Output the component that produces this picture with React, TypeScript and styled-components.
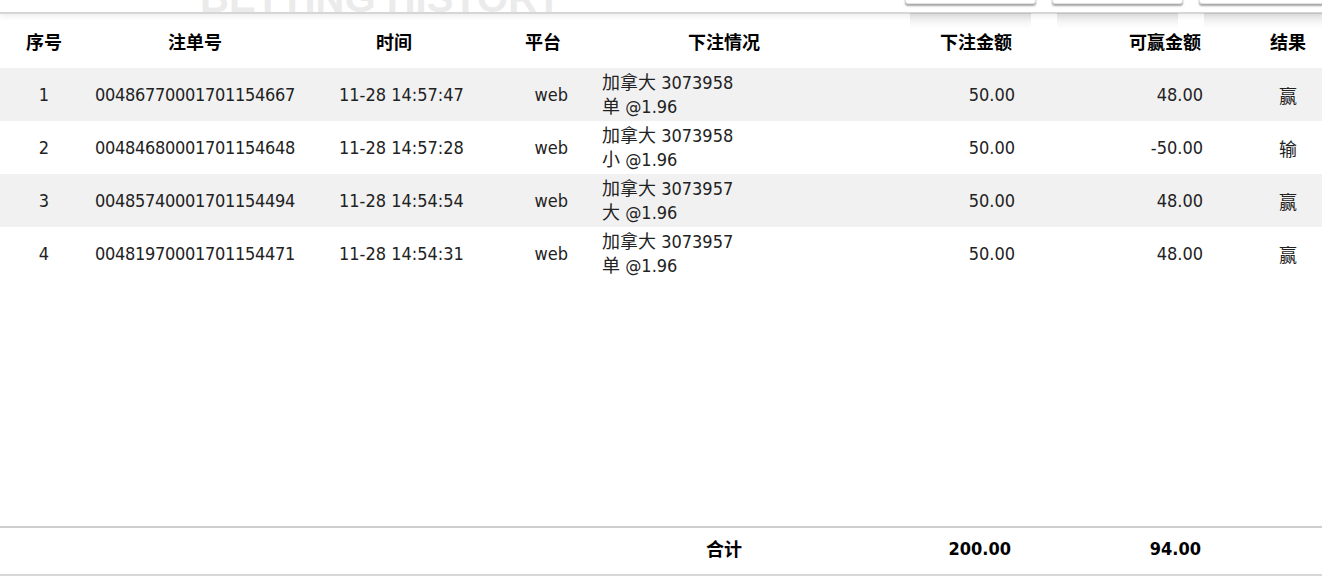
import styled, { createGlobalStyle } from "styled-components";

type Align = "left" | "center" | "right";

interface Column {
  title: string;
  head: Align;
  headPad: number;
  body: Align;
  bodyPad: number;
}

const columns: Column[] = [
  { title: "序号", head: "center", headPad: 0, body: "center", bodyPad: 0 },
  { title: "注单号", head: "center", headPad: 0, body: "center", bodyPad: 0 },
  { title: "时间", head: "center", headPad: 0, body: "left", bodyPad: 37 },
  { title: "平台", head: "center", headPad: 0, body: "right", bodyPad: 32 },
  { title: "下注情况", head: "center", headPad: 0, body: "left", bodyPad: 2 },
  { title: "下注金额", head: "right", headPad: 8, body: "right", bodyPad: 5 },
  { title: "可赢金额", head: "right", headPad: 53, body: "right", bodyPad: 51 },
  { title: "结果", head: "center", headPad: 0, body: "center", bodyPad: 0 },
];

const bets = [
  { id: "00486770001701154667", time: "11-28 14:57:47", team: "加拿大 3073958", pick: "单 @1.96", stake: "50.00", win: "48.00", result: "赢" },
  { id: "00484680001701154648", time: "11-28 14:57:28", team: "加拿大 3073958", pick: "小 @1.96", stake: "50.00", win: "-50.00", result: "输" },
  { id: "00485740001701154494", time: "11-28 14:54:54", team: "加拿大 3073957", pick: "大 @1.96", stake: "50.00", win: "48.00", result: "赢" },
  { id: "00481970001701154471", time: "11-28 14:54:31", team: "加拿大 3073957", pick: "单 @1.96", stake: "50.00", win: "48.00", result: "赢" },
];

const GRID = "88px 214px 184px 114px 248px 172px 234px 1fr";

const GlobalStyle = createGlobalStyle`
  html, body {
    margin: 0;
    padding: 0;
    background: #fff;
    overflow: hidden;
  }
  body {
    font-family: "DejaVu Sans Condensed", "DejaVu Sans", "Noto Sans CJK SC", sans-serif;
    color: #222;
  }
`;

const Page = styled.div`
  height: 100vh;
  display: flex;
  flex-direction: column;
`;

const TopBar = styled.div`
  position: relative;
  z-index: 2;
  height: 12px;
  flex-shrink: 0;
  display: flex;
  align-items: flex-end;
  padding-left: 200px;
  border-bottom: 2px solid #d6d6d6;
  box-shadow: 0 2px 6px rgba(0, 0, 0, 0.08);
`;

const Title = styled.h1`
  margin: 0 0 -6px;
  font-family: "Liberation Sans", Arial, sans-serif;
  font-size: 40px;
  font-weight: bold;
  line-height: 1;
  color: #ebebeb;
  white-space: nowrap;
`;

const ButtonGroup = styled.div`
  margin-left: auto;
  margin-right: -8px;
  margin-top: -26px;
  align-self: flex-start;
  display: flex;
  gap: 16px;
`;

const TabButton = styled.button`
  position: relative;
  width: 131px;
  height: 30px;
  padding: 0;
  background: #fff;
  border: 1px solid #e2e2e2;
  border-radius: 0 0 3px 3px;
  box-shadow: 0 2px 2px rgba(0, 0, 0, 0.35);

  &::after {
    content: "";
    position: absolute;
    left: 4px;
    right: 4px;
    top: calc(100% + 10px);
    height: 15px;
    background: linear-gradient(rgba(0, 0, 0, 0.1), rgba(0, 0, 0, 0));
  }
`;

const TableArea = styled.div`
  flex: 1;
  overflow: hidden;
`;

const Row = styled.div<{ $striped?: boolean }>`
  display: grid;
  grid-template-columns: ${GRID};
  height: 53px;
  box-sizing: border-box;
  background: ${(p) => (p.$striped ? "#f1f1f1" : "#fff")};
  font-size: 18px;
  line-height: 24px;
`;

const HeadRow = styled(Row)`
  height: 54px;
  padding-top: 4px;
  font-weight: bold;
  color: #000;
`;

const Cell = styled.div<{ $align: Align; $pad: number }>`
  display: flex;
  flex-direction: column;
  justify-content: center;
  align-items: ${(p) =>
    p.$align === "left" ? "flex-start" : p.$align === "right" ? "flex-end" : "center"};
  text-align: ${(p) => p.$align};
  padding-left: ${(p) => (p.$align === "left" ? p.$pad : 0)}px;
  padding-right: ${(p) => (p.$align === "right" ? p.$pad : 0)}px;
  white-space: nowrap;
`;

const OrderNo = styled.span`
  letter-spacing: -0.3px;
`;

const Result = styled.span`
  font-family: "Noto Sans CJK SC", sans-serif;
  font-weight: 400;
  color: #222;
`;

const Footer = styled.div`
  flex-shrink: 0;
  display: grid;
  grid-template-columns: ${GRID};
  height: 50px;
  padding-bottom: 6px;
  box-sizing: border-box;
  margin-bottom: 2px;
  border-top: 2px solid #cfcfcf;
  border-bottom: 2px solid #d8d8d8;
  font-size: 18px;
  font-weight: bold;
  color: #000;
`;

export default function App() {
  return (
    <Page>
      <GlobalStyle />
      <TopBar>
        <Title>BETTING HISTORY</Title>
        <ButtonGroup>
          <TabButton aria-label="tab 1" />
          <TabButton aria-label="tab 2" />
          <TabButton aria-label="tab 3" />
        </ButtonGroup>
      </TopBar>

      <TableArea>
        <HeadRow>
          {columns.map((c) => (
            <Cell key={c.title} $align={c.head} $pad={c.headPad}>
              {c.title}
            </Cell>
          ))}
        </HeadRow>
        {bets.map((b, i) => {
          const values = [
            String(i + 1),
            <OrderNo>{b.id}</OrderNo>,
            b.time,
            "web",
            <>
              <span>{b.team}</span>
              <span>{b.pick}</span>
            </>,
            b.stake,
            b.win,
            <Result>{b.result}</Result>,
          ];
          return (
            <Row key={b.id} $striped={i % 2 === 0}>
              {values.map((v, j) => (
                <Cell key={j} $align={columns[j].body} $pad={columns[j].bodyPad}>
                  {v}
                </Cell>
              ))}
            </Row>
          );
        })}
      </TableArea>

      <Footer>
        <Cell $align="center" $pad={0} />
        <Cell $align="center" $pad={0} />
        <Cell $align="center" $pad={0} />
        <Cell $align="center" $pad={0} />
        <Cell $align="center" $pad={0}>合计</Cell>
        <Cell $align="right" $pad={9}>200.00</Cell>
        <Cell $align="right" $pad={53}>94.00</Cell>
        <Cell $align="center" $pad={0} />
      </Footer>
    </Page>
  );
}
